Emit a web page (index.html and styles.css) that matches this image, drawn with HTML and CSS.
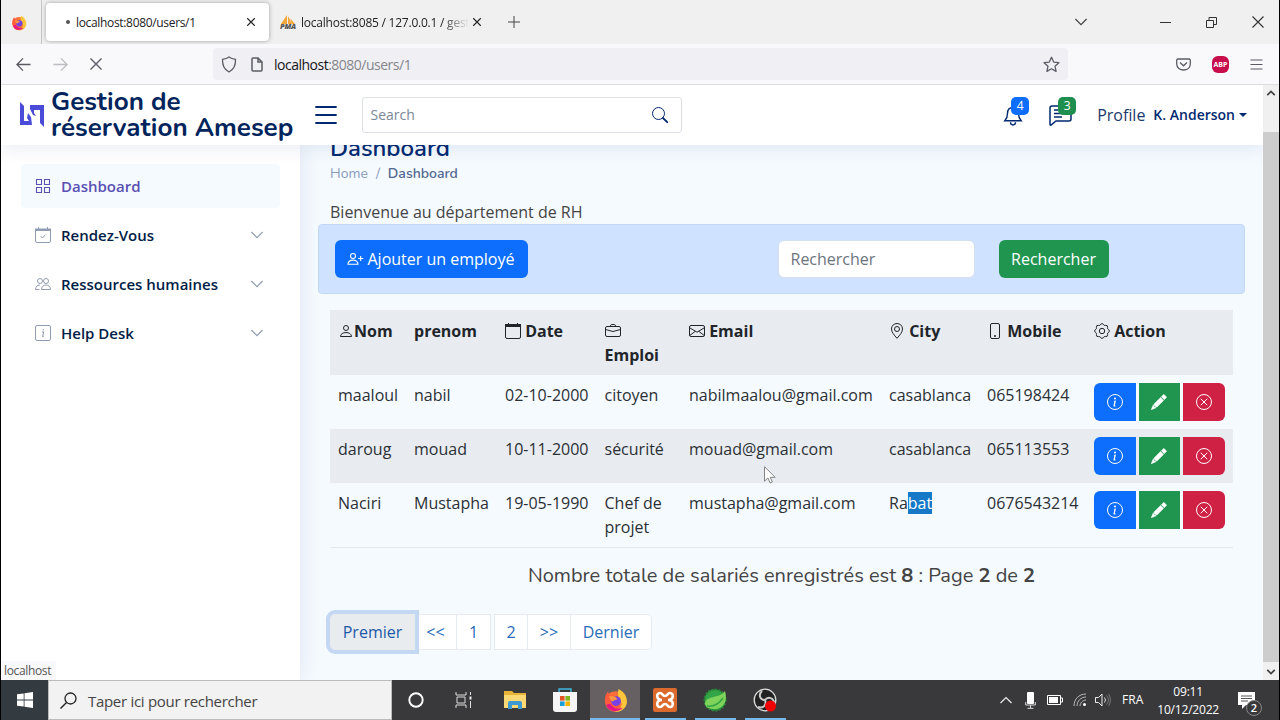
FILE: index.html
```html
<!DOCTYPE html>
<html lang="fr">
<head>
    <meta charset="UTF-8">
    <meta name="viewport" content="width=device-width, initial-scale=1.0">
    <title>Dashboard</title>
    <link rel="stylesheet" href="styles.css">
</head>
<body>
    <!-- Shared icons -->
    <svg class="icon-defs" width="0" height="0">
        <symbol id="chevron" viewBox="0 0 16 16"><path d="M1.6 4.6 8 11l6.4-6.4" fill="none" stroke="currentColor" stroke-width="var(--stroke, 1)"/></symbol>
        <symbol id="chevron-bold" viewBox="0 0 16 16"><path d="M2 4.600 8 10.600l6-6" fill="none" stroke="currentColor" stroke-width="2.800"/></symbol>
        <symbol id="close" viewBox="0 0 16 16"><path d="m3 3 10 10M13 3 3 13" fill="none" stroke="currentColor" stroke-width="1.5"/></symbol>
        <symbol id="arrow" viewBox="0 0 16 16"><path d="M15.5 8H1M7.500 1.500 1 8l6.500 6.500" fill="none" stroke="currentColor" stroke-width="1.400"/></symbol>
        <symbol id="search" viewBox="0 0 16 16"><circle cx="6.500" cy="6.500" r="6" fill="none" stroke="currentColor"/><path d="m11 11 4.200 4.200" stroke="currentColor" stroke-width="1.800" stroke-linecap="round"/></symbol>
        <symbol id="info" viewBox="0 0 16 16"><circle cx="8" cy="8" r="7.500" fill="none" stroke="currentColor"/><path d="m8.930 6.588-2.290.287-.082.380.450.083c.294.070.352.176.288.469l-.738 3.468c-.194.897.105 1.319.808 1.319.545 0 1.178-.252 1.465-.598l.088-.416c-.200.176-.492.246-.686.246-.275 0-.375-.193-.304-.533zM9 4.500a1 1 0 1 1-2 0 1 1 0 0 1 2 0" fill="currentColor"/></symbol>
        <symbol id="pencil" viewBox="0 0 16 16"><path d="m12.800.300 2.900 2.900-2.500 2.500-2.900-2.900zM9.500 3.500l3 3L6 13l-1.500-.600L3.500 12 3 10zM2.300 10.700l.700 2.100 2.200.900L.200 15.800z" fill="currentColor" stroke="currentColor" stroke-width=".500"/></symbol>
        <symbol id="delete" viewBox="0 0 16 16"><g fill="none" stroke="currentColor"><circle cx="8" cy="8" r="7.500"/><path d="m5 5 6 6m0-6-6 6" stroke-linecap="round"/></g></symbol>
        <symbol id="firefox" viewBox="0 0 24 24">
            <circle cx="12" cy="13" r="10" fill="#ff7139"/>
            <path d="M15 1c4 2 8 6 8 12 0 6-5 10-11 10 5-2 7-6 5-11-1-2-4-4-2-11z" fill="#ffc53b"/>
            <path d="M2 10C2 7 4 4 5 3c0 2 1 3 2 4 4 0 6 2 9 4 2 5-2 9-5 9-6 1-10-5-9-10z" fill="#ff5a3c"/>
            <path d="M3 16c2 7 12 8 16 3-5 2-10 0-12-4z" fill="#e31587"/>
            <circle cx="12.500" cy="12.500" r="4.700" fill="#7542e5"/>
            <path d="M6 8c4-1 7 1 8 3-3 0-3 1-5 2-1-1-3-2-3-5z" fill="#ff9640"/>
        </symbol>
    </svg>

    <div class="screen">
        <!-- Browser tabs -->
        <div class="tab-bar">
            <div class="pinned"><svg width="16" height="16"><use href="#firefox"/></svg></div>
            <div class="tab active">
                <span class="loading-dot"></span>
                <span class="tab-title">localhost:8080/users/1</span>
                <svg class="tab-close" width="12" height="12"><use href="#close"/></svg>
            </div>
            <div class="tab">
                <svg class="pma" width="17" height="16" viewBox="0 0 17 16">
                    <path d="M1 10 7 1v9zM8 10V2l4 8zM12 10 10 4l5 6z" fill="#f3a638"/>
                    <text x="0" y="15" font-size="7.500" textLength="16">PMA</text>
                </svg>
                <span class="tab-title faded">localhost:8085 / 127.0.0.1 / gest</span>
                <svg class="tab-close" width="12" height="12"><use href="#close"/></svg>
            </div>
            <svg class="new-tab" width="12" height="12" viewBox="0 0 12 12"><path d="M6 0v12M0 6h12" stroke="#444"/></svg>
            <div class="window-controls">
                <svg class="tabs-menu" width="14" height="14"><use href="#chevron"/></svg>
                <svg width="11" height="11" viewBox="0 0 11 11"><path d="M0 5.500h11" stroke="#333"/></svg>
                <svg width="11" height="11" viewBox="0 0 11 11"><path d="M.500 3.500h7v7h-7zM3 3V.500h7.500v7H8" fill="none" stroke="#333"/></svg>
                <svg width="12" height="12" viewBox="0 0 12 12"><path d="m.500.500 11 11m0-11-11 11" stroke="#333" stroke-width="1.100"/></svg>
            </div>
        </div>

        <!-- Address bar -->
        <div class="toolbar">
            <div class="nav-buttons">
                <svg width="15" height="15"><use href="#arrow"/></svg>
                <svg class="forward" width="15" height="15"><use href="#arrow"/></svg>
                <svg width="14" height="14" viewBox="0 0 14 14"><path d="m1.500 1.500 11 11m0-11-11 11" stroke="currentColor" stroke-width="1.400"/></svg>
            </div>
            <div class="url-bar">
                <svg width="16" height="17" viewBox="0 0 16 17"><path d="M8 1c2 1.500 4 2 6.500 2.300C14.800 10 12 14 8 16 4 14 1.200 10 1.500 3.300 4 3 6 2.500 8 1z" fill="none" stroke="#5b5b66" stroke-width="1.300"/></svg>
                <svg width="12" height="15" viewBox="0 0 12 15"><path d="M1 2c0-.700.300-1 1-1h5l4 4v8c0 .700-.300 1-1 1H2c-.700 0-1-.300-1-1zM7 1v4h4" fill="none" stroke="#5b5b66" stroke-width="1.500"/></svg>
                <span class="url"><b>localhost</b>:8080/users/1</span>
                <svg class="star" width="17" height="17" viewBox="0 0 17 17"><path d="m8.500 1.300 2.200 4.800 5.200.600-3.900 3.500 1.100 5.200-4.600-2.600-4.600 2.600L5 10.200 1.100 6.700l5.200-.600z" fill="none" stroke="#5b5b66" stroke-width="1.300" stroke-linejoin="round"/></svg>
            </div>
            <div class="extensions">
                <svg width="15" height="13" viewBox="0 0 15 13"><path d="M2 1h11q1.300 0 1.300 1.300V6c0 8-13.600 8-13.600 0V2.300Q.700 1 2 1zM4 4.500l3.500 3.300L11 4.500" fill="none" stroke="#5b5b66" stroke-width="1.300"/></svg>
                <span class="abp">ABP</span>
                <svg width="13" height="11" viewBox="0 0 13 11"><path d="M.500 1h12m-12 4.500h12M.500 10h12" stroke="#5b5b66" stroke-width="1.200"/></svg>
            </div>
        </div>

        <div class="viewport">
            <div class="site">
                <!-- Site header -->
                <header class="header">
                    <a class="logo">
                        <svg width="26" height="28" viewBox="0 0 26 28">
                            <path d="M1 1l4 4v15h5l-2-3 1-5 3 4 1 8H1zM11 4h14v22l-4-4V9h-6v3l2 3-3-1-3-6z" fill="#4a4bd6"/>
                        </svg>
                        <span>Gestion de<br>réservation Amesep</span>
                    </a>
                    <svg class="menu-toggle" width="22" height="18" viewBox="0 0 22 18"><path d="M1 1h20M1 9h20M1 17h20" stroke="#012970" stroke-width="1.800" stroke-linecap="round"/></svg>
                    <div class="search-bar">
                        <span>Search</span>
                        <svg width="16" height="16"><use href="#search"/></svg>
                    </div>
                    <div class="header-nav">
                        <div class="nav-icon bell">
                            <svg width="20" height="21" viewBox="0 0 20 21"><path d="M10 2.500c-4 0-5.500 3-5.500 6 0 4-1.500 6-2.700 7.300h16.400C17 14.500 15.500 12.500 15.500 8.500c0-3-1.500-6-5.500-6zM10 2.500V1M7.500 17.300c0 3.500 5 3.500 5 0" fill="none" stroke="currentColor" stroke-width="1.400"/></svg>
                            <span class="badge blue">4</span>
                        </div>
                        <div class="nav-icon chat">
                            <svg width="23" height="21" viewBox="0 0 23 21"><path d="M3 1h17q2 0 2 2v11q0 2-2 2H7l-5 4q-1 .500-1-1V3q0-2 2-2zM5 5h12M5 8.500h12M5 12h8" fill="none" stroke="currentColor" stroke-width="1.500"/></svg>
                            <span class="badge green">3</span>
                        </div>
                        <span class="profile">Profile</span>
                        <span class="username">K. Anderson</span>
                        <span class="caret"></span>
                    </div>
                </header>

                <div class="content">
                    <!-- Sidebar -->
                    <aside class="sidebar">
                        <a class="side-link current">
                            <svg width="16" height="16" viewBox="0 0 16 16"><path d="M1.500 1.500h5v5h-5zM9.500 1.500h5v5h-5zM1.500 9.500h5v5h-5zM9.500 9.500h5v5h-5z" fill="none" stroke="currentColor" stroke-width="1.100"/></svg>
                            <span>Dashboard</span>
                        </a>
                        <a class="side-link">
                            <svg width="16" height="16" viewBox="0 0 16 16"><path d="M.500 3v11q0 1.500 1.500 1.500h12q1.500 0 1.500-1.500V3zM5.500 9l2 2 3-3.300" fill="none" stroke="currentColor"/><path d="M0 1.500h16V4H0zM3 0h1v2H3zM12 0h1v2h-1z" fill="currentColor"/></svg>
                            <span>Rendez-Vous</span>
                            <svg class="chev" width="14" height="14"><use href="#chevron"/></svg>
                        </a>
                        <a class="side-link">
                            <svg width="16" height="16" viewBox="0 0 16 16"><g fill="none" stroke="currentColor"><circle cx="11" cy="5" r="2.500"/><circle cx="5" cy="5" r="2.500"/><path d="M6.500 13.500c0-6 9-6 9 0zM4.500 13.500h-4C.500 11 2 9 5 9"/></g></svg>
                            <span>Ressources humaines</span>
                            <svg class="chev" width="14" height="14"><use href="#chevron"/></svg>
                        </a>
                        <a class="side-link">
                            <svg width="16" height="16" viewBox="0 0 16 16"><rect x=".500" y=".500" width="15" height="15" rx="1.500" fill="none" stroke="currentColor"/><path d="M7 7h1.700l-1 4.500h1M8.300 4v1.300" fill="none" stroke="currentColor" stroke-width="1.100"/></svg>
                            <span>Help Desk</span>
                            <svg class="chev" width="14" height="14"><use href="#chevron"/></svg>
                        </a>
                    </aside>

                    <!-- Main -->
                    <main class="main">
                        <h1>Dashboard</h1>
                        <nav class="breadcrumb"><span>Home</span><i>/</i><b>Dashboard</b></nav>
                        <p class="welcome">Bienvenue au département de RH</p>

                        <div class="alert">
                            <button class="btn add">
                                <svg width="17" height="16" viewBox="0 0 17 16"><g fill="none" stroke="currentColor" stroke-width="1.100"><circle cx="6" cy="5" r="2.500"/><path d="M1 13.300c0-5.600 10-5.600 10 0zM13.700 5v5M11.200 7.500h5"/></g></svg>
                                <span>Ajouter un employé</span>
                            </button>
                            <input class="field" type="text" placeholder="Rechercher">
                            <button class="btn find">Rechercher</button>
                        </div>

                        <table class="table">
                            <colgroup>
                                <col class="c-nom"><col class="c-prenom"><col class="c-date"><col class="c-emploi">
                                <col class="c-email"><col class="c-city"><col class="c-mobile"><col>
                            </colgroup>
                            <thead>
                                <tr>
                                    <th><svg width="16" height="16" viewBox="0 0 16 16"><g fill="none" stroke="currentColor"><circle cx="8" cy="5" r="2.500"/><path d="M2.500 13.500c0-5.300 11-5.300 11 0z"/></g></svg>Nom</th>
                                    <th>prenom</th>
                                    <th><svg width="16" height="16" viewBox="0 0 16 16"><rect x=".500" y="1.500" width="15" height="14" rx="1.500" fill="none" stroke="currentColor"/><path d="M0 1h3V0h1v1h8V0h1v1h3v3H0z" fill="currentColor"/></svg> Date</th>
                                    <th><svg width="16" height="16" viewBox="0 0 16 16"><path d="M2 3.500h12q1.500 0 1.500 1.500v7q0 1.500-1.500 1.500H2Q.500 13.500.500 12V5q0-1.500 1.500-1.500zM5.500 3.500q0-2 1-2h3q1 0 1 2M.500 6.500 8 8.500l7.500-2" fill="none" stroke="currentColor"/></svg> Emploi</th>
                                    <th><svg width="16" height="16" viewBox="0 0 16 16"><path d="M2 2.500h12q1.500 0 1.500 1.500v8q0 1.500-1.500 1.500H2Q.500 13.500.500 12V4q0-1.500 1.500-1.500zM.500 4.700 8 9.200l7.500-4.500M.700 12.500l5.600-4.200M15.300 12.500 9.700 8.300" fill="none" stroke="currentColor"/></svg> Email</th>
                                    <th><svg width="16" height="16" viewBox="0 0 16 16"><path d="M8 15.300C5 12 2.500 9 2.500 6c0-7.300 11-7.300 11 0 0 3-2.500 6-5.500 9.300z" fill="none" stroke="currentColor"/><circle cx="8" cy="6" r="2.500" fill="none" stroke="currentColor"/></svg> City</th>
                                    <th><svg width="16" height="16" viewBox="0 0 16 16"><rect x="3.500" y=".500" width="9" height="15" rx="1.500" fill="none" stroke="currentColor"/><circle cx="8" cy="13" r="1" fill="currentColor"/></svg> Mobile</th>
                                    <th><svg width="16" height="16" viewBox="0 0 16 16"><circle cx="8" cy="8" r="2.700" fill="none" stroke="currentColor"/><path d="M6.500 1.400q1.500-1.700 3 0 .500 1.600 2 1 2.300-.600 2.100 2-.600 1.500 1 2.100 1.700 1.500 0 3-1.600.500-1 2 .200 2.600-2.100 2.100-1.500-.600-2 1-1.500 1.700-3 0-.500-1.600-2-1-2.300.500-2.100-2.100.600-1.500-1-2-1.700-1.500 0-3 1.600-.600 1-2.100-.200-2.600 2.100-2 1.500.600 2-1z" fill="none" stroke="currentColor"/></svg> Action</th>
                                </tr>
                            </thead>
                            <tbody>
                                <tr>
                                    <td>maaloul</td><td>nabil</td><td>02-10-2000</td><td>citoyen</td>
                                    <td>nabilmaalou@gmail.com</td><td>casablanca</td><td>065198424</td>
                                    <td><div class="actions">
                                        <a class="act info"><svg width="16" height="16"><use href="#info"/></svg></a>
                                        <a class="act edit"><svg width="16" height="16"><use href="#pencil"/></svg></a>
                                        <a class="act del"><svg width="16" height="16"><use href="#delete"/></svg></a>
                                    </div></td>
                                </tr>
                                <tr class="shaded">
                                    <td>daroug</td><td>mouad</td><td>10-11-2000</td><td>sécurité</td>
                                    <td>mouad@gmail.com</td><td>casablanca</td><td>065113553</td>
                                    <td><div class="actions">
                                        <a class="act info"><svg width="16" height="16"><use href="#info"/></svg></a>
                                        <a class="act edit"><svg width="16" height="16"><use href="#pencil"/></svg></a>
                                        <a class="act del"><svg width="16" height="16"><use href="#delete"/></svg></a>
                                    </div></td>
                                </tr>
                                <tr>
                                    <td>Naciri</td><td>Mustapha</td><td>19-05-1990</td><td>Chef de projet</td>
                                    <td>mustapha@gmail.com</td><td>Ra<span class="selected">bat</span></td><td>0676543214</td>
                                    <td><div class="actions">
                                        <a class="act info"><svg width="16" height="16"><use href="#info"/></svg></a>
                                        <a class="act edit"><svg width="16" height="16"><use href="#pencil"/></svg></a>
                                        <a class="act del"><svg width="16" height="16"><use href="#delete"/></svg></a>
                                    </div></td>
                                </tr>
                            </tbody>
                        </table>

                        <p class="total">Nombre totale de salariés enregistrés est <b>8</b> : Page <b>2</b> de <b>2</b></p>

                        <div class="pagination">
                            <a class="page first">Premier</a>
                            <a class="page prev">&lt;&lt;</a>
                            <a class="page num">1</a>
                            <a class="page num second">2</a>
                            <a class="page next">&gt;&gt;</a>
                            <a class="page last">Dernier</a>
                        </div>
                    </main>
                </div>
            </div>

            <div class="scrollbar">
                <svg class="up" width="10" height="10"><use href="#chevron-bold"/></svg>
                <div class="thumb"></div>
                <svg width="10" height="10"><use href="#chevron-bold"/></svg>
            </div>
            <span class="status">localhost</span>
        </div>

        <!-- Taskbar -->
        <div class="taskbar">
            <div class="start"><svg width="16" height="16" viewBox="0 0 16 16"><path d="M0 2.300 6.700 1.400v6.200H0zM7.500 1.300 16 0v7.600H7.500zM0 8.400h6.700v6.200L0 13.700zM7.500 8.400H16V16l-8.500-1.300z" fill="#fff"/></svg></div>
            <div class="task-search">
                <svg width="17" height="17" viewBox="0 0 17 17"><circle cx="10.500" cy="6.500" r="5.500" fill="none" stroke="#222" stroke-width="1.300"/><path d="m6.500 10.500-6 6" stroke="#222" stroke-width="1.400"/></svg>
                <span>Taper ici pour rechercher</span>
            </div>
            <div class="apps">
                <div class="app cortana"><svg width="18" height="18" viewBox="0 0 18 18"><circle cx="9" cy="9" r="6.700" fill="none" stroke="#fff" stroke-width="1.900"/></svg></div>
                <div class="app task-view"><svg width="18" height="16" viewBox="0 0 18 16"><path d="M1 0v3h10V0M1 16v-3h10v3M2 5h8v6H2zM15.500 0v3M15.500 9v7" fill="none" stroke="#ddd"/><path d="M14.500 4.500h2v3h-2z" fill="#eee"/></svg></div>
                <div class="app"><svg width="22" height="18" viewBox="0 0 22 18"><path d="M0 0h8l2 2h12v15H0z" fill="#e8b339"/><path d="M0 4h22v13H0z" fill="#fcd974"/><path d="M4 18v-6q0-2 2-2h10q2 0 2 2v6h-4v-4H8v4z" fill="#3d9bd1"/></svg></div>
                <div class="app"><svg width="24" height="24" viewBox="0 0 24 24"><path d="M6 5V1h12v4" fill="none" stroke="#41b6df" stroke-width="1.400"/><path d="M0 4h24v17q0 3-3 3H3q-3 0-3-3z" fill="#f5f5f5"/><path d="M7 8h4.600v4.600H7z" fill="#e55325"/><path d="M12.400 8H17v4.600h-4.600z" fill="#7fb51e"/><path d="M7 13.400h4.600V18H7z" fill="#1b9fd8"/><path d="M12.400 13.400H17V18h-4.600z" fill="#f6b300"/></svg></div>
                <div class="app open focused"><svg width="25" height="25"><use href="#firefox"/></svg></div>
                <div class="app open"><svg width="24" height="24" viewBox="0 0 24 24"><rect width="24" height="24" rx="2" fill="#dc6a2c"/><path d="M9 12C3 12 3 5 7 5c3 0 2 3 5 3s2-3 5-3c4 0 4 7-2 7 6 0 6 7 2 7-3 0-2-3-5-3s-2 3-5 3c-4 0-4-7 2-7z" fill="none" stroke="#fff" stroke-width="2.600"/></svg></div>
                <div class="app open"><svg width="24" height="24" viewBox="0 0 24 24"><circle cx="12" cy="12" r="10.500" fill="#32a546" stroke="#268b38" stroke-width="2" stroke-dasharray="2 1.500"/><path d="M2 15C4 7 16 11 22 3c4 14-6 21-17 17-2-1-3-3-3-5z" fill="#7fd35a"/><path d="M4 18c7 1 12-2 16-8" fill="none" stroke="#32a546" stroke-width="1.500"/></svg></div>
                <div class="app open"><svg width="24" height="24" viewBox="0 0 24 24"><circle cx="12" cy="12" r="10.800" fill="#222" stroke="#ddd" stroke-width="1.300"/><path d="M12 12c-5 0-7-5-3-9M12 12c3-4 9-2 9 3M12 12c2 5-2 9-7 7" fill="none" stroke="#ccc" stroke-width="2"/><circle cx="17.500" cy="18" r="5.500" fill="#f20000"/></svg></div>
            </div>
            <div class="tray">
                <svg width="12" height="8" viewBox="0 0 12 8"><path d="m.500 7 5.500-5.500L11.500 7" fill="none" stroke="#eee" stroke-width="1.200"/></svg>
                <svg width="11" height="17" viewBox="0 0 11 17"><rect x="2" width="7" height="12" rx="1" fill="#fff"/><path d="M.700 10v3h9.600v-3M5.500 13v3M2.500 16.300h6" fill="none" stroke="#ddd"/></svg>
                <svg width="16" height="10" viewBox="0 0 16 10"><path d="M.500.500h13v9H.500zM14 3h1.500v4H14" fill="none" stroke="#fff"/><path d="M2 2h9v6H2z" fill="#fff"/></svg>
                <svg width="14" height="14" viewBox="0 0 14 14"><path d="M1 13C1 6 6 1 13 1M4 13c0-5 4-9 9-9M7 13c0-3 3-6 6-6" fill="none" stroke="#bbb"/><circle cx="11.500" cy="11.500" r="1.500" fill="#fff"/></svg>
                <svg width="16" height="14" viewBox="0 0 16 14"><path d="M.500 4.500h3L7 1v12L3.500 9.500h-3z" fill="none" stroke="#eee"/><path d="M9.500 4.500q2 2.500 0 5" fill="none" stroke="#ddd"/><path d="M11.500 2.500q4 4.500 0 9M13.500 1q4 6 0 12" fill="none" stroke="#777"/></svg>
                <span class="lang">FRA</span>
                <div class="clock"><span>09:11</span><span>10/12/2022</span></div>
                <div class="notif">
                    <svg width="17" height="17" viewBox="0 0 17 17"><path d="M0 0h17v13H8l-4 4v-4H0z" fill="#fff"/><path d="M3 4h11M3 6.500h11M3 9h7" stroke="#555"/></svg>
                    <span>2</span>
                </div>
            </div>
        </div>

        <!-- Mouse pointer -->
        <svg class="pointer" width="12" height="18" viewBox="0 0 12 18"><path d="M.500.700v14.500l3.400-3.200 2.300 5 2.200-1-2.200-4.700h4.900z" fill="#fff" stroke="#777" stroke-width=".900"/></svg>
    </div>
</body>
</html>
```

FILE: styles.css
```css
* {
    box-sizing: border-box;
}

body {
    margin: 0;
    font-family: "Open Sans", "Noto Sans", sans-serif;
    font-size: 16px;
    line-height: 24px;
    color: #444;
}

svg {
    display: block;
    flex-shrink: 0;
}

.icon-defs {
    position: absolute;
}

.screen {
    position: relative;
    width: 1280px;
    height: 720px;
    border-left: 1px solid #000;
    border-right: 1px solid #000;
    display: flex;
    flex-direction: column;
    overflow: hidden;
    white-space: nowrap;
}

/* Browser tabs */
.tab-bar {
    height: 44px;
    flex-shrink: 0;
    background: #f0f0f0;
    display: flex;
    align-items: center;
    color: #222;
    font-size: 12px;
}

.pinned {
    width: 41px;
    height: 44px;
    padding: 15px 0 0 10px;
    border-right: 1px solid #c4c4c6;
}

.tab {
    height: 38px;
    display: flex;
    align-items: center;
    padding-left: 11px;
}

.tab.active {
    width: 223px;
    margin-left: 4px;
    padding-left: 20px;
    background: #fff;
    border-radius: 4px;
    box-shadow: 0 0 4px rgba(0, 0, 0, 0.35);
}

.loading-dot {
    width: 4px;
    height: 4px;
    border-radius: 50%;
    background: #555;
    margin-right: 6px;
}

.tab-title {
    width: 168px;
    padding-top: 2px;
    letter-spacing: -0.33px;
    overflow: hidden;
}

.active .tab-title {
    width: 168px;
}

.tab-title.faded {
    margin-left: 4px;
    letter-spacing: -0.23px;
    -webkit-mask-image: linear-gradient(90deg, #000 84%, transparent);
    mask-image: linear-gradient(90deg, #000 84%, transparent);
}

.pma {
    font-family: "Open Sans", sans-serif;
    font-weight: 800;
    font-style: italic;
    fill: #555;
}

.tab-close {
    margin-left: 2px;
}

.active .tab-close {
    margin-left: 1px;
}

.new-tab {
    margin-left: 25px;
}

.window-controls {
    margin-left: auto;
    display: flex;
    align-items: center;
    padding-right: 15px;
    color: #444;
}

.tabs-menu {
    --stroke: 1.4;
}

.window-controls svg:nth-child(2) { margin-left: 72px; }
.window-controls svg:nth-child(3) { margin-left: 35px; }
.window-controls svg:nth-child(4) { margin-left: 35px; }

/* Address bar */
.toolbar {
    height: 41px;
    flex-shrink: 0;
    background: #f9f9fb;
    border-bottom: 1px solid #dddde0;
    display: flex;
    align-items: center;
    color: #5b5b66;
}

.nav-buttons {
    width: 212px;
    padding-left: 15px;
    display: flex;
    align-items: center;
    gap: 21.5px;
}

.forward {
    transform: scaleX(-1);
    color: #bcbcc2;
}

.url-bar {
    width: 855px;
    height: 32px;
    background: #f0f0f4;
    border-radius: 4px;
    display: flex;
    align-items: center;
    padding: 0 8px;
    gap: 14px;
}

.url {
    padding-top: 2px;
    font-size: 14px;
    letter-spacing: -0.5px;
    color: #85858d;
    margin-left: -3px;
}

.url b {
    font-weight: 400;
    color: #15141a;
}

.star {
    margin-left: auto;
}

.extensions {
    margin-left: auto;
    padding-right: 16px;
    display: flex;
    align-items: center;
    gap: 21px;
}

.abp {
    width: 17px;
    height: 17px;
    border-radius: 6px;
    background: #c70d4c;
    color: #fff;
    font-size: 7px;
    font-weight: 700;
    line-height: 17px;
    text-align: center;
}

/* Web page */
.viewport {
    position: relative;
    height: 595px;
    flex-shrink: 0;
    display: flex;
}

.site {
    width: 1262px;
    display: flex;
    flex-direction: column;
    overflow: hidden;
}

.header {
    position: relative;
    z-index: 3;
    height: 60px;
    flex-shrink: 0;
    background: #fff;
    box-shadow: 0 2px 20px rgba(1, 41, 112, 0.1);
    display: flex;
    align-items: center;
    padding-left: 18px;
    color: #012970;
}

.logo {
    width: 296px;
    display: flex;
    align-items: center;
    gap: 6px;
    font-family: "Nunito", "Open Sans", sans-serif;
    font-size: 26px;
    font-weight: 700;
    line-height: 26px;
    color: #01245c;
}

.menu-toggle {
    margin-right: 25px;
}

.search-bar {
    width: 320px;
    height: 36px;
    border: 1px solid #dcdfe6;
    border-radius: 3px;
    display: flex;
    align-items: center;
    justify-content: space-between;
    padding: 0 13px 0 7.5px;
    font-size: 14px;
    color: #7c8798;
}

.search-bar svg {
    color: #012970;
}

.header-nav {
    margin-left: auto;
    padding-right: 16px;
    display: flex;
    align-items: center;
}

.nav-icon {
    position: relative;
}

.chat {
    margin-left: 26px;
}

.badge {
    position: absolute;
    left: 8px;
    top: -8px;
    width: 18px;
    height: 18px;
    border-radius: 5px;
    font-size: 12px;
    line-height: 18px;
    text-align: center;
    color: #fff;
}

.badge.blue { background: #0d6efd; }
.badge.green { background: #1f8f50; left: 9px; }

.profile {
    margin-left: 25px;
    color: #1b3a6b;
}

.username {
    margin-left: 8px;
    font-size: 14px;
    font-weight: 600;
}

.caret {
    margin-left: 4px;
    border: 4px solid transparent;
    border-top-color: #012970;
    border-bottom: 0;
}

.content {
    flex: 1;
    display: flex;
    background: #f5faff;
    min-height: 0;
}

/* Sidebar */
.sidebar {
    width: 299px;
    flex-shrink: 0;
    background: #fff;
    box-shadow: 0 0 20px rgba(1, 41, 112, 0.1);
    padding: 19px 20px;
    display: flex;
    flex-direction: column;
    gap: 5px;
}

.side-link {
    height: 44px;
    border-radius: 4px;
    display: flex;
    align-items: center;
    padding: 0 16px 0 14px;
    gap: 10px;
    font-size: 15px;
    font-weight: 600;
    color: #012047;
}

.side-link svg {
    color: #929cb0;
}

.side-link.current {
    background: #f5faff;
}

.side-link.current,
.side-link.current svg {
    color: #5a50b4;
}

.side-link .chev {
    margin-left: auto;
    --stroke: 1.3;
}

/* Main */
.main {
    flex: 1;
    padding: 0 30px;
}

.main h1 {
    margin: -12px 0 0;
    font-family: "Nunito", "Open Sans", sans-serif;
    font-size: 24px;
    font-weight: 600;
    line-height: 30px;
    color: #012970;
}

.breadcrumb {
    height: 22px;
    display: flex;
    align-items: center;
    gap: 8px;
    font-family: "Nunito", "Open Sans", sans-serif;
    font-size: 14px;
    color: #899bbd;
}

.breadcrumb i {
    font-style: normal;
}

.breadcrumb b {
    font-weight: 600;
    color: #51678f;
}

.welcome {
    margin: 15px 0 0;
}

.alert {
    width: 927px;
    height: 70px;
    margin: 0 0 16px -12px;
    border: 1px solid #c3d8f5;
    border-radius: 4px;
    background: #cfe2ff;
    display: flex;
    align-items: center;
    padding-left: 15.5px;
}

.btn {
    height: 38px;
    padding: 0;
    border: 0;
    border-radius: 6px;
    color: #fff;
    font: inherit;
    display: flex;
    align-items: center;
    justify-content: center;
}

.add {
    width: 193px;
    gap: 3px;
    background: #0d6efd;
}

.field {
    width: 197px;
    height: 38px;
    margin: 0 24px 0 250px;
    padding: 0 12px;
    border: 1px solid #d5dff0;
    border-radius: 6px;
    font: inherit;
}

.field::placeholder {
    color: #6c757d;
}

.find {
    width: 110px;
    background: #1f9550;
}

.table {
    width: 903px;
    table-layout: fixed;
    border-collapse: collapse;
    color: #2b3035;
}

.c-nom { width: 76px; }
.c-prenom { width: 91px; }
.c-date { width: 99px; }
.c-emploi { width: 85px; }
.c-email { width: 200px; }
.c-city { width: 98px; }
.c-mobile { width: 107px; }

.table th,
.table td {
    padding: 8px;
    text-align: left;
    vertical-align: top;
}

.table th {
    height: 65px;
    padding: 9px 8px 8px;
    font-weight: 700;
    color: #212529;
    background: #e8ecf1;
}

.table th svg {
    display: inline-block;
    vertical-align: -2px;
}

.table td {
    height: 54px;
    padding-bottom: 0;
}

.table td:last-child {
    padding: 8px 0 0 8px;
}

.shaded {
    background: #e8ecf1;
}

.table td:nth-child(4),
.table th:nth-child(4) {
    white-space: normal;
    padding-left: 8.5px;
}

.table tbody tr:last-child td {
    height: 64px;
    border-bottom: 1px solid #e3e8ee;
}

.selected {
    display: inline-block;
    height: 22px;
    line-height: 22px;
    background: #1579c8;
    color: #fff;
}

.actions {
    display: flex;
    gap: 3px;
}

.act {
    width: 41.5px;
    height: 38px;
    display: flex;
    align-items: center;
    justify-content: center;
    color: #fff;
}

.act.info {
    background: #0d6efd;
    border-radius: 6px 0 0 6px;
}

.act.edit {
    background: #1f9550;
}

.act.del {
    background: #cf2144;
    border-radius: 0 6px 6px 0;
}

.total {
    margin: 16px 0 26px;
    width: 903px;
    text-align: center;
    font-family: "Nunito", "Open Sans", sans-serif;
    font-size: 20px;
}

/* Pagination */
.pagination {
    display: flex;
    height: 36px;
}

.page {
    display: flex;
    align-items: center;
    justify-content: center;
    background: #fff;
    border: 1px solid #e6ebf1;
    border-left: 0;
    color: #2a6cb8;
}

.first {
    width: 85px;
    margin-right: 3px;
    background: #e9ecef;
    border: 0;
    border-radius: 5px 0 0 5px;
    box-shadow: 0 0 0 4px #c5d8f3;
    z-index: 1;
    color: #1d59a8;
}

.prev { width: 41px; margin-left: -2px; padding-right: 1px; }
.num { width: 34px; }
.second { margin-left: 3px; border-left: 1px solid #e6ebf1; }
.next { width: 43px; }
.last { width: 81px; border-radius: 0 5px 5px 0; }

/* Scrollbar */
.scrollbar {
    width: 16px;
    height: 595px;
    background: #f0f0f0;
    display: flex;
    flex-direction: column;
    align-items: center;
    color: #444;
    padding: 3px 0;
}

.up {
    transform: scaleY(-1);
}

.thumb {
    width: 16px;
    height: 530px;
    margin: 34px 0 5px;
    background: #cdcdcd;
}

.status {
    position: absolute;
    left: 0;
    bottom: 0;
    height: 19px;
    width: 55px;
    padding-left: 3px;
    font-size: 12px;
    line-height: 20px;
    letter-spacing: -0.35px;
    background: #f9f9fb;
    color: #555;
}

/* Taskbar */
.taskbar {
    height: 40px;
    flex-shrink: 0;
    background: #39393b;
    display: flex;
    color: #fff;
}

.start {
    width: 47px;
    display: flex;
    align-items: center;
    justify-content: center;
    background: #343b40;
}

.task-search {
    width: 344px;
    background: #f2f2f2;
    border: 1px solid #bbb;
    display: flex;
    align-items: center;
    padding-left: 11px;
    gap: 11px;
    font-size: 15px;
    letter-spacing: -0.3px;
    color: #444;
}

.task-search span {
    padding-top: 2px;
}

.apps {
    display: flex;
}

.app {
    width: 50px;
    height: 40px;
    display: flex;
    align-items: center;
    justify-content: center;
}

.app.cortana {
    width: 48px;
}

.app.task-view {
    width: 48px;
    margin-right: 2px;
}

.app.open {
    background: linear-gradient(#76b9ed, #76b9ed) center bottom / 41px 2px no-repeat;
}

.app.focused {
    background-color: #666062;
    background-size: 50px 2px;
}

.tray {
    margin-left: auto;
    display: flex;
    align-items: center;
    padding-right: 24px;
}

.tray svg:nth-child(2) { margin-left: 13px; }
.tray svg:nth-child(3) { margin-left: 11px; }
.tray svg:nth-child(4) { margin-left: 10px; }
.tray svg:nth-child(5) { margin-left: 8px; }

.lang {
    margin-left: 11px;
    font-size: 12px;
}

.clock {
    margin-left: 14px;
    display: flex;
    flex-direction: column;
    align-items: center;
    padding-top: 1px;
    font-size: 12px;
    line-height: 18px;
    letter-spacing: -0.2px;
}

.notif {
    position: relative;
    margin-left: 19px;
}

.notif span {
    position: absolute;
    left: 8px;
    top: 8px;
    width: 16px;
    height: 16px;
    border: 1px solid #888;
    border-radius: 50%;
    background: #39393b;
    font-size: 11px;
    font-weight: 600;
    line-height: 14px;
    text-align: center;
}

.pointer {
    position: absolute;
    left: 763px;
    top: 466px;
    z-index: 5;
}
```
